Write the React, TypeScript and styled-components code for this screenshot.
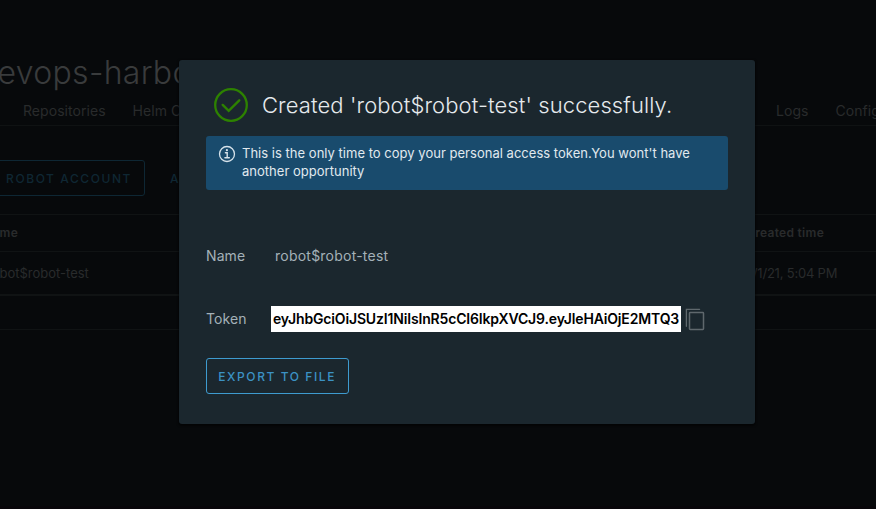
import React from 'react';
import styled, { createGlobalStyle } from 'styled-components';

const GlobalStyle = createGlobalStyle`
  *, *::before, *::after { box-sizing: border-box; }
  body {
    margin: 0;
    background: #07090b;
    font-family: Inter, "Open Sans", sans-serif;
    overflow: hidden;
  }
`;

const Screen = styled.div`
  position: relative;
  width: 876px;
  height: 509px;
  overflow: hidden;
`;

const Page = styled.main`
  display: flex;
  flex-direction: column;
  height: 509px;
  overflow: hidden;
  background: #07090b;
  border-bottom: 3px solid #08060a;
  color: #292b2c;
  white-space: nowrap;
`;

const PageTitle = styled.h1`
  margin: 53px 0 0 -22px;
  height: 39px;
  font-size: 32px;
  font-weight: 300;
  line-height: 39px;
  letter-spacing: 0.3px;
  color: #393b3c;
`;

const Tabs = styled.nav`
  display: flex;
  justify-content: space-between;
  flex: none;
  height: 34px;
  padding-left: 23px;
  border-bottom: 1px solid #0f1213;
`;

const TabGroup = styled.div<{ $width?: number }>`
  display: flex;
  gap: 27px;
  width: ${(p) => (p.$width ? `${p.$width}px` : 'auto')};
`;

const Tab = styled.span`
  font-size: 14px;
  line-height: 37px;
  letter-spacing: 0.05px;
`;

const Actions = styled.div`
  display: flex;
  align-items: center;
  flex: none;
  height: 36px;
  margin: 34px 0 18px;
`;

const OutlineButton = styled.button<{ $dim?: boolean }>`
  display: flex;
  align-items: center;
  justify-content: flex-end;
  width: ${(p) => (p.$dim ? '175px' : '143px')};
  height: 36px;
  margin: 0 0 0 ${(p) => (p.$dim ? '-30px' : '0')};
  padding: 1px 12px 0;
  border: 1px solid ${(p) => (p.$dim ? '#0e2734' : '#3e9bcf')};
  border-radius: 3px;
  background: transparent;
  color: ${(p) => (p.$dim ? '#0f2733' : '#3b92c4')};
  font: 500 12px Inter, sans-serif;
  letter-spacing: 1.58px;
  white-space: nowrap;
`;

const MenuLabel = styled.span`
  margin: 1px 0 0 25px;
  color: #0f2733;
  font-size: 12px;
  font-weight: 500;
  letter-spacing: 1.5px;
`;

const Table = styled.section`
  display: flex;
  flex-direction: column;
  border-top: 1px solid #101314;
`;

const Row = styled.div<{ $head?: boolean }>`
  display: grid;
  grid-template-columns: ${(p) => (p.$head ? '763px 1fr' : '758px 1fr')};
  height: ${(p) => (p.$head ? '37px' : '44px')};
  margin-left: ${(p) => (p.$head ? '-17px' : '-13px')};
  border-bottom: ${(p) => (p.$head ? '1px solid #101314' : '2px solid #101314')};
  font-size: ${(p) => (p.$head ? '12px' : '13px')};
  font-weight: ${(p) => (p.$head ? 600 : 400)};
  line-height: ${(p) => (p.$head ? '36px' : '42px')};
  letter-spacing: ${(p) => (p.$head ? '0.3px' : '0')};
`;

const DateCell = styled.span`
  letter-spacing: -0.2px;
`;

const TableFooter = styled.div`
  height: 34px;
  border-bottom: 1px solid #101314;
`;

const Dialog = styled.section`
  position: absolute;
  top: 60px;
  left: 179px;
  display: flex;
  flex-direction: column;
  align-items: flex-start;
  width: 576px;
  height: 364px;
  padding: 27px 27px 30px;
  border-radius: 3px;
  background: #1b272e;
  color: #a4b1b8;
  box-shadow: 0 1px 2px 1px rgba(0, 0, 0, 0.5);
`;

const DialogHeader = styled.header`
  display: flex;
  align-items: center;
  gap: 13px;
  height: 36px;
  margin: 0 0 13px 7px;
`;

const DialogTitle = styled.h2`
  margin: 0;
  color: #e6eaed;
  font-size: 22px;
  font-weight: 350;
  line-height: 36px;
  letter-spacing: 0.1px;
  white-space: nowrap;
`;

const Alert = styled.div`
  display: flex;
  gap: 6px;
  width: 522px;
  height: 54px;
  padding: 9px 12px;
  border-radius: 3px;
  background: #194b6d;
  color: #e0e9ef;
`;

const AlertText = styled.p`
  width: 460px;
  margin: -1px 0 0;
  font-size: 13px;
  line-height: 18px;
  letter-spacing: 0.02px;
`;

const Field = styled.div<{ $top: number }>`
  display: flex;
  align-items: center;
  height: 26px;
  margin-top: ${(p) => p.$top}px;
  font-size: 14px;
`;

const FieldLabel = styled.label`
  width: 65px;
  margin-top: -2px;
  letter-spacing: 0.1px;
`;

const FieldValue = styled.span`
  margin-top: -2px;
  padding-left: 4px;
  letter-spacing: 0.23px;
`;

const TokenBox = styled.output`
  display: block;
  width: 410px;
  height: 26px;
  padding: 0 2px;
  background: #fff;
  color: #000;
  font-size: 14px;
  font-weight: 600;
  line-height: 26px;
  letter-spacing: -0.16px;
  white-space: nowrap;
`;

const CopyButton = styled.button`
  display: flex;
  width: 22px;
  height: 24px;
  margin: 1px 0 0 4px;
  padding: 0;
  border: 0;
  background: none;
  color: #5f686d;
`;

const Footer = styled.footer`
  margin-top: 26px;
`;

const SuccessIcon = () => (
  <svg width="36" height="36" viewBox="0 0 36 36" fill="none" stroke="#2d8200">
    <circle cx="18" cy="18" r="15.8" strokeWidth="2.3" />
    <path d="M9.7 17.9l6 6L26.3 13.3" strokeWidth="2.4" strokeLinecap="round" />
  </svg>
);

const InfoIcon = () => (
  <svg width="18" height="18" viewBox="0 0 18 18" fill="none" stroke="#d6e2ea">
    <circle cx="9" cy="9" r="7.5" strokeWidth="1.3" />
    <circle cx="8.9" cy="5.2" r="1.1" fill="#d6e2ea" stroke="none" />
    <path d="M7.4 7.8h1.8v4.8M6.9 12.8h4.4" strokeWidth="1.4" strokeLinecap="round" />
  </svg>
);

const CopyIcon = () => (
  <svg width="22" height="24" viewBox="0 0 22 24" fill="none" stroke="currentColor" strokeLinecap="round">
    <path d="M1.4 18.3V1.3h13.2" strokeWidth="1.3" />
    <rect x="4.5" y="4.5" width="14" height="17" rx="0.7" strokeWidth="1.5" />
  </svg>
);

export default function App() {
  return (
    <>
      <GlobalStyle />
      <Screen>
        <Page aria-hidden="true">
          <PageTitle>devops-harbor</PageTitle>
          <Tabs>
            <TabGroup>
              <Tab>Repositories</Tab>
              <Tab>Helm Charts</Tab>
            </TabGroup>
            <TabGroup $width={100}>
              <Tab>Logs</Tab>
              <Tab>Configuration</Tab>
            </TabGroup>
          </Tabs>
          <Actions>
            <OutlineButton $dim>ROBOT ACCOUNT</OutlineButton>
            <MenuLabel>ACTION</MenuLabel>
          </Actions>
          <Table>
            <Row $head>
              <span>Name</span>
              <span>Created time</span>
            </Row>
            <Row>
              <span>robot$robot-test</span>
              <DateCell>3/1/21, 5:04 PM</DateCell>
            </Row>
            <TableFooter />
          </Table>
        </Page>
        <Dialog role="dialog" aria-modal="true">
          <DialogHeader>
            <SuccessIcon />
            <DialogTitle>Created 'robot$robot-test' successfully.</DialogTitle>
          </DialogHeader>
          <Alert>
            <InfoIcon />
            <AlertText>
              This is the only time to copy your personal access token.You wont't have another opportunity
            </AlertText>
          </Alert>
          <Field $top={53}>
            <FieldLabel>Name</FieldLabel>
            <FieldValue>robot$robot-test</FieldValue>
          </Field>
          <Field $top={37}>
            <FieldLabel>Token</FieldLabel>
            <TokenBox>eyJhbGciOiJSUzI1NiIsInR5cCI6IkpXVCJ9.eyJleHAiOjE2MTQ3</TokenBox>
            <CopyButton aria-label="Copy token">
              <CopyIcon />
            </CopyButton>
          </Field>
          <Footer>
            <OutlineButton>EXPORT TO FILE</OutlineButton>
          </Footer>
        </Dialog>
      </Screen>
    </>
  );
}
